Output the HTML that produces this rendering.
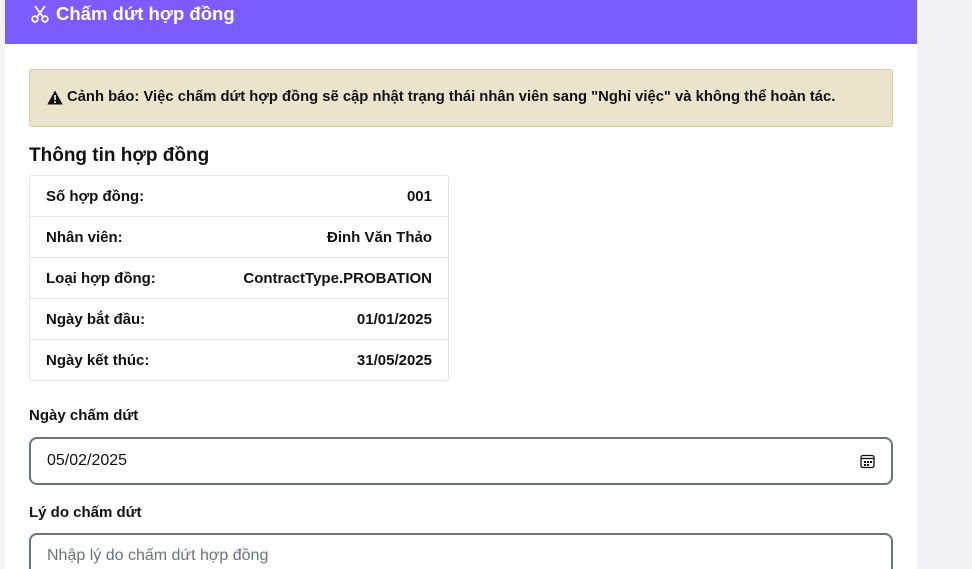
<!DOCTYPE html>
<html><head><meta charset="utf-8"><style>
*{box-sizing:border-box;margin:0;padding:0}
html,body{width:972px;height:569px;overflow:hidden}
body{background:#f3f3f5;font-family:"Liberation Sans",Roboto,sans-serif;color:#111;position:relative}
.modal{position:absolute;left:5px;top:0;width:912px;height:569px;background:#fff;overflow:hidden}
.hdr{height:44px;background:#7b5cff;color:#fff;font-weight:bold;font-size:18.5px;padding-left:25px;display:flex;align-items:center;padding-bottom:16px}
.hdr svg{margin-right:6px}
.warn{position:absolute;left:24px;top:69px;width:864px;height:58px;background:#ebe4cd;border:1px solid #d8cf9c;border-radius:3px;font-weight:bold;font-size:14.8px;padding:19px 0 0 17px;display:flex;align-items:flex-start}
.warn svg{margin:1px 4px 0 0;flex:none}
h3{position:absolute;left:24px;top:145px;font-size:19px;font-weight:bold}
.tbl{position:absolute;left:24px;top:175px;width:420px;border:1px solid #e5e5e5;border-radius:3px}
.row{height:41px;display:flex;justify-content:space-between;align-items:center;padding:0 16px;font-weight:bold;font-size:15px;border-bottom:1px solid #e5e5e5}
.row:last-child{border-bottom:none;height:40px}
.lbl{position:absolute;left:24px;font-weight:bold;font-size:15px}
.inp{position:absolute;left:24px;width:864px;height:48px;border:2px solid #6b7280;border-radius:8px;font-size:16px;padding:0 16px;display:flex;align-items:center;justify-content:space-between}
</style></head><body>
<div class="modal">
<div class="hdr"><svg width="20" height="20" viewBox="0 0 20 20" fill="none" stroke="#fff" stroke-width="1.8"><circle cx="5" cy="15" r="2.8"/><circle cx="15" cy="15" r="2.8"/><path d="M7 13L15 2M13 13L5 2"/></svg>Chấm dứt hợp đồng</div>
<div class="warn"><svg width="16" height="15" viewBox="0 0 16 15"><path d="M8 0.5L15.7 14.5H0.3Z" fill="#111"/><rect x="7.1" y="5" width="1.8" height="5" fill="#ebe4cd"/><rect x="7.1" y="11.2" width="1.8" height="1.8" fill="#ebe4cd"/></svg><span>Cảnh báo: Việc chấm dứt hợp đồng sẽ cập nhật trạng thái nhân viên sang "Nghỉ việc" và không thể hoàn tác.</span></div>
<h3>Thông tin hợp đồng</h3>
<div class="tbl">
<div class="row"><span>Số hợp đồng:</span><span>001</span></div>
<div class="row"><span>Nhân viên:</span><span>Đinh Văn Thảo</span></div>
<div class="row"><span>Loại hợp đồng:</span><span>ContractType.PROBATION</span></div>
<div class="row"><span>Ngày bắt đầu:</span><span>01/01/2025</span></div>
<div class="row"><span>Ngày kết thúc:</span><span>31/05/2025</span></div>
</div>
<div class="lbl" style="top:407px">Ngày chấm dứt</div>
<div class="inp" style="top:437px"><span>05/02/2025</span><svg width="15" height="15" viewBox="0 0 15 15" fill="none" stroke="#111" stroke-width="1.3"><rect x="1" y="1.5" width="13" height="12" rx="2"/><path d="M1 4.5H14"/><g fill="#111" stroke="none"><rect x="4" y="7" width="2" height="2"/><rect x="7" y="7" width="2" height="2"/><rect x="10" y="7" width="2" height="2"/><rect x="4" y="10" width="2" height="2"/><rect x="7" y="10" width="2" height="2"/></g></svg></div>
<div class="lbl" style="top:504px">Lý do chấm dứt</div>
<div class="inp" style="top:533px;height:60px;align-items:flex-start;padding-top:12px;color:#6b7280">Nhập lý do chấm dứt hợp đồng</div>
</div>
</body></html>
